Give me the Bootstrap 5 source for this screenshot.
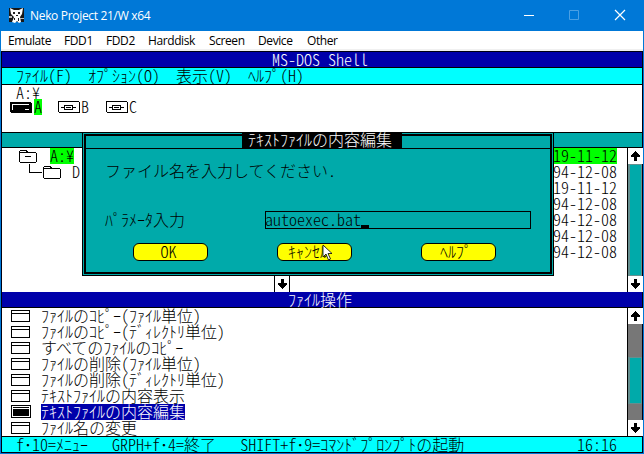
<!DOCTYPE html>
<html lang="ja">
<head>
<meta charset="utf-8">
<title>Neko Project 21/W x64</title>
<link href="https://cdn.jsdelivr.net/npm/bootstrap@5.3.0/dist/css/bootstrap.min.css" rel="stylesheet">
<style>
body{width:644px;height:454px;overflow:hidden;background:#0078d7;font-family:"Open Sans",sans-serif}
.titlebar{height:31px;color:#fff;font:12px/31px "Open Sans","Noto Sans",sans-serif;letter-spacing:-.32px}
.logo{flex:none}
.menubar{height:20px;margin:0 1px;background:#fff;border-bottom:2px solid #f0f0f0;color:#000;font:12px/19px "Open Sans","Noto Sans",sans-serif;letter-spacing:-.4px;padding-left:7px}
.menubar span{white-space:nowrap}
.dos{width:642px;margin-left:1px;height:402px;border:1px solid #001;background:#fff;color:#000;font:300 16px/14px "Noto Sans CJK JP",sans-serif}
.dos svg{display:block;flex:none;shape-rendering:crispEdges}
.dos span,.prompt-box span{white-space:pre;display:inline-block;height:16px}
.dos span span,.prompt-box span span{display:inline;height:auto}
.hw{font-feature-settings:"hwid"}
.navy{background:#0000aa;color:#fff;height:15px}
.navy.tall{height:16px}
.cyan{background:#00ffff;height:16px}
.line{border-top:1px solid #000}
.line-b{border-bottom:1px solid #000}
.drives{height:47px;padding-left:7px}
.drives .pathrow{height:14px;padding-left:7px}
.drives .pathrow span{display:block}
.drive{width:48px}
.first-drive{width:49px}
.lit{background:#0f0}
.teal{background:#00aaaa;height:16px}
.tree{height:144px}
.tree .nodes{padding-left:16px}
.dates{width:64px;margin-right:10px}
.dates div{height:16px}
.arrow{width:15px;height:16px;background:#fff}
.sbar{width:15px;border-left:1px solid #000}
.thumb{background:#00aaaa;border:1px solid #658f8f;border-left-width:2px}
.trough{background:#777}
.programs{height:128px}
.programs .names{padding-left:7px}
.item{height:16px}
.item .label-text{margin-left:8px}
.item.sel .label-text{background:#0000aa;color:#fff}
.prompt-box{left:82px;top:132px;width:472px;height:144px;background:#00aaaa;border:1px solid #000;color:#000;font:300 16px/14px "Noto Sans CJK JP",sans-serif;padding:1px}
.prompt-inner{height:140px;border:2px solid #000;position:relative}
.prompt-title{height:13px;border-bottom:1px solid #000}
.prompt-name{left:156px;top:-4px;width:160px;height:17px;background:#000;color:#fff;padding-left:6px}
.prompt-msg{padding:14px 0 0 19px;height:30px}
.prompt-field{padding:32px 0 0 19px}
.entry{width:266px;height:18px;border:1px solid #000}
.entry span{margin-left:-1px}
.caret{width:8px;height:3px;background:#000;margin-top:13px}
.choices{padding:14px 0 0 47px;gap:69px}
.choice{width:75px;height:18px;background:#ff0;border:1px solid #000;border-radius:6px}
.pointer{left:322px;top:244px}
.hscroll{left:274px;top:276px;width:16px;height:16px;border:solid #000;border-width:0 1px;background:#fff}
</style>
<script src="https://cdn.jsdelivr.net/npm/bootstrap@5.3.0/dist/js/bootstrap.bundle.min.js"></script>
</head>
<body class="position-relative">
<svg width="0" height="0" class="position-absolute">
 <defs>
  <symbol id="up" viewBox="0 0 14 16"><path d="M7 3h1v1h1v1h1v1h1v1h1v2H9v4H6V9H3V7h1V6h1V5h1V4h1z"/></symbol>
  <symbol id="down" viewBox="0 0 14 16"><path d="M6 3h3v4h3v2h-1v1h-1v1H9v1H8v1H7v-1H6v-1H5v-1H4V9H3V7h3z"/></symbol>
  <symbol id="disk" viewBox="0 0 24 16"><path fill="#fff" stroke="#000" d="M.5 2.500h20l1 1v10h-20l-1-1z"/><path d="M21 3h1v11H2v-1h19zM3 8h4v1H3zM14 8h4v1h-4z"/><path fill="none" stroke="#000" d="M6.500 6.500h8v4h-8zM8 8.500h5"/></symbol>
  <symbol id="hdd" viewBox="0 0 24 16"><path d="M1 3h21v1h1v10H2v-1H1z"/><path fill="none" stroke="#fff" d="M3.500 11V5.500H20M16 10.500h4"/></symbol>
  <symbol id="win" viewBox="0 0 20 16"><path fill="#fff" stroke="#000" d="M.5 2.500h18v11H.5zM1 5.500h17"/></symbol>
  <symbol id="winsel" viewBox="0 0 20 16"><path d="M0 1h20v13H0z"/><path fill="none" stroke="#fff" d="M1.500 2.500h17v10h-17zM2 4.500h16"/></symbol>
 </defs>
</svg>

<div class="titlebar d-flex align-items-center">
 <svg width="18" height="18" viewBox="0 0 18 18" class="logo ms-2 me-1"><path fill="#171717" d="M1 1h15v14H1z"/><path fill="#fff" d="M2 1l4 2h5l4-2-1 6-2 3 1 5-2 1-2-2-2 2-3-1 2-5-3-3z"/><path fill="#222" d="M5 5h2v2H5zM10 5h2v2h-2zM8 8h2v1H8zM6 11h1v2H6zM10 11h1v3h-1z"/><path fill="#bbb" d="M1 9h3v2H1zM12 11h4v1h-4z"/></svg>
 <span>Neko Project 21/W x64</span>
 <svg class="ms-auto" width="120" height="31" viewBox="524 0 120 31" fill="none" stroke="#fff"><path d="M524 15.500h10"/><path stroke="#4ba0e4" d="M569.500 10.500h9v9h-9z"/><path stroke-width="1.200" d="M615 10l10 10M625 10l-10 10"/></svg>
</div>
<div class="menubar d-flex">
 <span style="width:56px">Emulate</span><span style="width:42px">FDD1</span><span style="width:42px">FDD2</span><span style="width:61px">Harddisk</span><span style="width:49px">Screen</span><span style="width:49px">Device</span><span>Other</span>
</div>

<div class="dos">
 <div class="navy d-flex justify-content-center pe-1"><span class="hw">MS-DOS Shell</span></div>
 <div class="cyan line line-b d-flex" style="height:18px;padding-left:14px"><span>ﾌｧｲﾙ<span class="hw">(F)  </span>ｵﾌﾟｼｮﾝ<span class="hw">(O)  </span>表示<span class="hw">(V)  </span>ﾍﾙﾌﾟ<span class="hw">(H)</span></span></div>
 <div class="drives">
  <div class="pathrow"><span class="hw">A:¥</span></div>
  <div class="d-flex">
   <div class="drive first-drive d-flex"><svg width="25" height="16"><use href="#hdd" width="24" height="16"/></svg><span class="hw lit">A</span></div>
   <div class="drive d-flex"><svg width="23" height="16"><use href="#disk" width="24" height="16"/></svg><span class="hw">B</span></div>
   <div class="drive d-flex"><svg width="23" height="16"><use href="#disk" width="24" height="16"/></svg><span class="hw">C</span></div>
  </div>
 </div>
 <div class="teal line line-b"></div>
 <div class="tree d-flex">
  <div class="nodes flex-grow-1">
   <div class="d-flex"><svg width="32" height="16" fill="#fff" stroke="#000"><path d="M1.500 13.500v-10l1-1h6l1 2h8l1 1v8l-1 1h-15zM2 4.500h7M7 8.500h6"/></svg><span class="hw lit">A:¥</span></div>
   <div class="d-flex"><svg width="54" height="16" fill="#fff" stroke="#000"><path fill="none" d="M11.500 0v8.500h12"/><path d="M25.500 13.500v-10l1-1h6l1 2h8l1 1v8l-1 1h-15zM26 4.500h7"/></svg><span class="hw">D</span></div>
  </div>
  <div class="dates">
   <div class="lit"><span class="hw">19-11-12</span></div>
   <div><span class="hw">94-12-08</span></div>
   <div><span class="hw">19-11-12</span></div>
   <div><span class="hw">94-12-08</span></div>
   <div><span class="hw">94-12-08</span></div>
   <div><span class="hw">94-12-08</span></div>
   <div><span class="hw">94-12-08</span></div>
  </div>
  <div class="sbar d-flex flex-column"><svg class="arrow"><use href="#up" width="14" height="16"/></svg><div class="thumb flex-grow-1"></div><svg class="arrow"><use href="#down" width="14" height="16"/></svg></div>
 </div>
 <div class="navy tall line-b d-flex justify-content-center pe-1"><span>ﾌｧｲﾙ操作</span></div>
 <div class="programs d-flex">
  <div class="names flex-grow-1">
   <div class="item d-flex"><svg width="24" height="16"><use href="#win" x="2" width="20" height="16"/></svg><span class="label-text">ﾌｧｲﾙのｺﾋﾟｰ<span class="hw">(</span>ﾌｧｲﾙ単位<span class="hw">)</span></span></div>
   <div class="item d-flex"><svg width="24" height="16"><use href="#win" x="2" width="20" height="16"/></svg><span class="label-text">ﾌｧｲﾙのｺﾋﾟｰ<span class="hw">(</span>ﾃﾞｨﾚｸﾄﾘ単位<span class="hw">)</span></span></div>
   <div class="item d-flex"><svg width="24" height="16"><use href="#win" x="2" width="20" height="16"/></svg><span class="label-text">すべてのﾌｧｲﾙのｺﾋﾟｰ</span></div>
   <div class="item d-flex"><svg width="24" height="16"><use href="#win" x="2" width="20" height="16"/></svg><span class="label-text">ﾌｧｲﾙの削除<span class="hw">(</span>ﾌｧｲﾙ単位<span class="hw">)</span></span></div>
   <div class="item d-flex"><svg width="24" height="16"><use href="#win" x="2" width="20" height="16"/></svg><span class="label-text">ﾌｧｲﾙの削除<span class="hw">(</span>ﾃﾞｨﾚｸﾄﾘ単位<span class="hw">)</span></span></div>
   <div class="item d-flex"><svg width="24" height="16"><use href="#win" x="2" width="20" height="16"/></svg><span class="label-text">ﾃｷｽﾄﾌｧｲﾙの内容表示</span></div>
   <div class="item sel d-flex"><svg width="24" height="16"><use href="#winsel" x="2" width="20" height="16"/></svg><span class="label-text">ﾃｷｽﾄﾌｧｲﾙの内容編集</span></div>
   <div class="item d-flex"><svg width="24" height="16"><use href="#win" x="2" width="20" height="16"/></svg><span class="label-text">ﾌｧｲﾙ名の変更</span></div>
  </div>
  <div class="sbar d-flex flex-column trough"><svg class="arrow"><use href="#up" width="14" height="16"/></svg><div class="thumb" style="height:47px;margin-top:33px"></div><svg class="arrow mt-auto"><use href="#down" width="14" height="16"/></svg></div>
 </div>
 <div class="cyan line d-flex justify-content-between" style="padding:0 25px 0 14px"><span><span class="hw">f</span>･<span class="hw">10=</span>ﾒﾆｭｰ<span class="hw">   GRPH+f</span>･<span class="hw">4=</span>終了<span class="hw">   SHIFT+f</span>･<span class="hw">9=</span>ｺﾏﾝﾄﾞﾌﾟﾛﾝﾌﾟﾄの起動</span><span class="hw">16:16</span></div>
</div>

<div class="hscroll position-absolute"><svg width="14" height="16" class="d-block" shape-rendering="crispEdges"><use href="#down" width="14" height="16"/></svg></div>
<div class="prompt-box position-absolute">
 <div class="prompt-inner">
  <div class="prompt-title"></div>
  <div class="prompt-name position-absolute"><span>ﾃｷｽﾄﾌｧｲﾙの内容編集</span></div>
  <div class="prompt-msg"><span>ファイル名を入力してください<span class="hw">.</span></span></div>
  <div class="prompt-field d-flex align-items-center"><span style="width:160px">ﾊﾟﾗﾒｰﾀ入力</span><div class="entry d-flex"><span class="hw">autoexec.bat</span><div class="caret"></div></div></div>
  <div class="choices d-flex">
   <div class="choice d-flex justify-content-center pe-1"><span class="hw">OK</span></div>
   <div class="choice d-flex" style="padding-left:10px"><span>ｷｬﾝｾﾙ</span></div>
   <div class="choice d-flex" style="padding-left:18px"><span>ﾍﾙﾌﾟ</span></div>
  </div>
 </div>
</div>
<svg class="pointer position-absolute" width="12" height="19" viewBox="0 0 12 19"><path fill="#fff" stroke="#000" stroke-width=".8" d="M1 1v12l3-3 2.500 6 2-1L6 9.500h4z"/></svg>
</body>
</html>
